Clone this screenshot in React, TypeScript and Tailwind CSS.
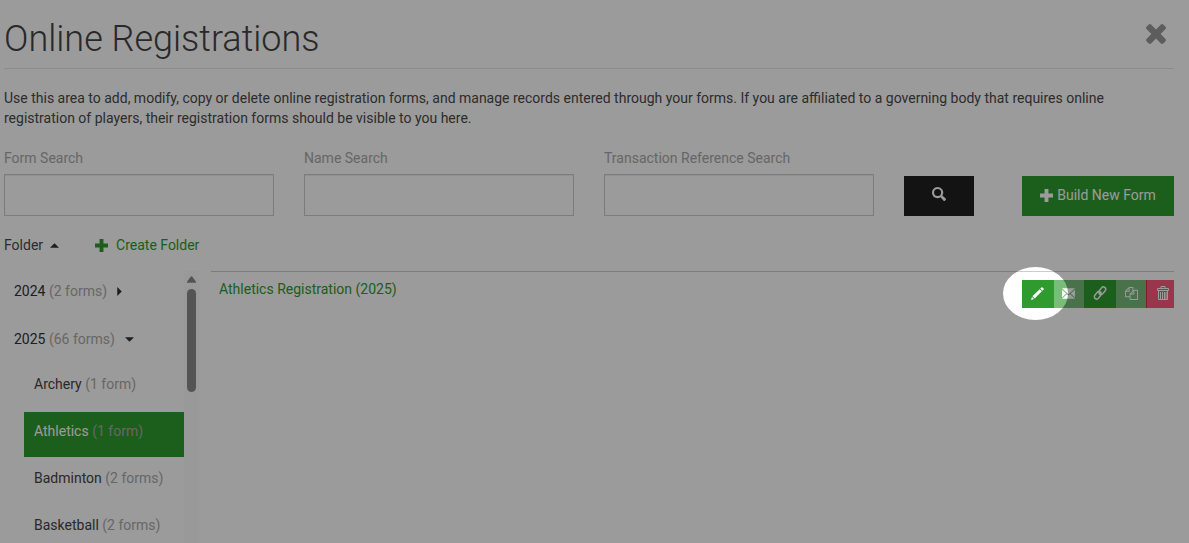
import React from "react";

const FONT = "font-['Roboto','Liberation_Sans',sans-serif]";

function Icon({ d, className, box = "0 0 20 20" }: { d: string; className: string; box?: string }) {
  return (
    <svg viewBox={box} className={className} fill="currentColor" aria-hidden="true">
      <path fillRule="evenodd" d={d} />
    </svg>
  );
}

const PLUS = "M7 0h6v7h7v6h-7v7H7v-7H0V7h7z";
const CROSS =
  "M1490 1322q0 40-28 68l-136 136q-28 28-68 28t-68-28l-294-294-294 294q-28 28-68 28t-68-28l-136-136q-28-28-28-68t28-68l294-294-294-294q-28-28-28-68t28-68l136-136q28-28 68-28t68 28l294 294 294-294q28-28 68-28t68 28l136 136q28 28 28 68t-28 68l-294 294 294 294q28 28 28 68z";
const SEARCH =
  "M8 0a8 8 0 0 1 6.8 12.2l4.7 4.3q1 1 0 2l-1 1q-1 1-2 0l-4.3-4.7A8 8 0 1 1 8 0zM8 3a5 5 0 1 0 0 10A5 5 0 0 0 8 3z";
const PENCIL =
  "M16 0.6q.8-.8 1.6 0l1.8 1.8q.8.8 0 1.6l-1.8 1.8-3.400-3.400zM13.300 3.300l3.400 3.400L5.600 17.800 2.200 14.400zM1.500 15.400l3.100 3.100L0 20z";
const MAIL =
  "M0 0h20L10 9zM0 2.200L6.500 8 0 14.200zM20 2.200L13.500 8 20 14.200zM7.500 9L10 11.200 12.500 9 20 16H0z";
const COPY =
  "M1696 384q40 0 68 28t28 68v1216q0 40-28 68t-68 28h-960q-40 0-68-28t-28-68v-288h-544q-40 0-68-28t-28-68v-672q0-40 20-88t48-76l408-408q28-28 76-48t88-20h416q40 0 68 28t28 68v328q68-40 128-40h416zm-544 213l-299 299h299v-299zm-640-384l-299 299h299v-299zm196 647l316-316v-416h-384v416q0 40-28 68t-68 28h-416v640h512v-256q0-40 20-88t48-76zm956 804v-1152h-384v416q0 40-28 68t-68 28h-416v640h896z";

function LinkIcon() {
  return (
    <svg viewBox="0 0 14 14" className="size-3.5" fill="none" stroke="currentColor" strokeWidth="1.5" aria-hidden="true">
      <rect x="5.300" y="2.300" width="8" height="4.600" rx="2.300" transform="rotate(-52 9.300 4.600)" />
      <rect x="0.700" y="7.100" width="8" height="4.600" rx="2.300" transform="rotate(-52 4.700 9.400)" />
      <path d="M5.800 8.400l2.500-3" />
    </svg>
  );
}

function TrashIcon() {
  return (
    <svg viewBox="0 0 12 14" className="h-3.5 w-3" fill="none" stroke="currentColor" aria-hidden="true">
      <path d="M4 2.500v-2h4v2M0.500 4.500v-2h11v2zM1.500 4.500v9h9v-9M3.500 6v7M5.500 6v7M7.500 6v7M9 6v7" />
    </svg>
  );
}

function SearchField({ id, label }: { id: string; label: string }) {
  return (
    <div className="w-[270px]">
      <label htmlFor={id} className="block text-[#a9a9a9]">{label}</label>
      <input
        id={id}
        type="text"
        className="mt-1.5 block h-[42px] w-full border border-[#ccc] bg-white px-3 shadow-[inset_0_1px_1px_rgba(0,0,0,0.075)]"
      />
    </div>
  );
}

const SPORTS = [
  { name: "Archery", count: "(1 form)" },
  { name: "Athletics", count: "(1 form)", selected: true },
  { name: "Badminton", count: "(2 forms)" },
  { name: "Basketball", count: "(2 forms)" },
];

export default function App() {
  return (
    <div className={`relative h-screen overflow-hidden bg-white pr-[15px] pl-1 text-sm leading-5 text-[#4a4a4a] ${FONT}`}>
      <header className="flex h-[69px] items-center justify-between border-b border-[#e5e5e5] pt-2.5">
        <h1 className="text-4xl leading-10 font-light text-[#444]">Online Registrations</h1>
        <button type="button" aria-label="Close" className="mr-2 mb-2.5 text-[#999]">
          <Icon d={CROSS} box="302 366 1188 1188" className="size-5" />
        </button>
      </header>

      <p className="mt-[19px] pr-10">
        Use this area to add, modify, copy or delete online registration forms, and manage records entered through your
        forms. If you are affiliated to a governing body that requires online registration of players, their
        registration forms should be visible to you here.
      </p>

      <form className="mt-5 flex items-end gap-[30px]">
        <SearchField id="form-search" label="Form Search" />
        <SearchField id="name-search" label="Name Search" />
        <SearchField id="reference-search" label="Transaction Reference Search" />
        <button type="button" aria-label="Search" className="flex h-10 w-[70px] items-center justify-center bg-[#202020] pb-1 text-white">
          <Icon d={SEARCH} className="size-3.5" />
        </button>
        <button type="button" className="ml-auto flex h-10 w-[152px] items-center justify-center gap-1 bg-[#2f9b2f] pb-0.5 text-white">
          <Icon d={PLUS} className="size-[13px]" />
          Build New Form
        </button>
      </form>

      <div className="mt-[19px] flex items-center">
        <button type="button" className="flex items-center gap-[7px]">
          Folder
          <Icon d="M0 5L5 0l5 5z" box="0 0 10 5" className="h-[5px] w-[9px] text-[#333]" />
        </button>
        <a href="#create" className="ml-9 flex items-center gap-2 text-[#2f9b2f]">
          <Icon d={PLUS} className="size-[13px]" />
          Create Folder
        </a>
      </div>

      <div className="mt-4 flex">
        <nav className="flex w-[195px] shrink-0">
          <ul className="w-[180px]">
            <li className="flex h-12 items-start pt-[10px] pl-[10px]">
              <a href="#2024" className="flex items-center text-[#333]">
                2024&nbsp;<span className="text-[#aaa]">(2 forms)</span>
                <Icon d="M0 0l5 5-5 5z" box="0 0 5 10" className="ml-[10px] h-[9px] w-[5px]" />
              </a>
            </li>
            <li>
              <a href="#2025" className="flex h-[46px] items-start pt-[10px] pl-[10px] text-[#333]">
                2025&nbsp;<span className="text-[#aaa]">(66 forms)</span>
                <Icon d="M0 0h10L5 5z" box="0 0 10 5" className="mt-2 ml-[10px] h-[5px] w-[9px]" />
              </a>
              <ul className="flex flex-col gap-0.5 pl-5">
                {SPORTS.map((s) => (
                  <li key={s.name}>
                    <a
                      href={`#${s.name}`}
                      className={`block h-[45px] pt-[9px] pl-[10px] ${s.selected ? "bg-[#2f9b2f] text-white" : "text-[#444]"}`}
                    >
                      {s.name} <span className="text-[#aaa]">{s.count}</span>
                    </a>
                  </li>
                ))}
              </ul>
            </li>
          </ul>
          <div className="flex w-[15px] flex-col items-center bg-[#fcfcfc] pt-[5px] text-[#8b8b8b]">
            <Icon d="M4 0.500q1-1 2 0l4 5.500v1H0V6z" box="0 0 10 7" className="h-[7px] w-[9px]" />
            <div className="mt-1.5 h-[103px] w-[9px] rounded-full bg-[#8b8b8b]" />
          </div>
        </nav>

        <main className="ml-3 flex h-[38px] flex-1 items-start justify-between border-t border-[#ccc] pt-2 pl-2">
          <a href="#athletics-2025" className="-mt-px text-[#2f9b2f]">Athletics Registration (2025)</a>
          <div className="relative flex h-7 w-[152px] text-white">
            <button type="button" aria-label="Edit" className="flex w-8 items-center justify-center bg-[#2f9b2f] pr-px pb-0.5">
              <Icon d={PENCIL} className="size-[13px]" />
            </button>
            <button type="button" aria-label="Email" className="flex w-[30px] items-center justify-center bg-[#7abc7a] pr-px pb-0.5">
              <Icon d={MAIL} box="0 0 20 16" className="h-[11px] w-[13px]" />
            </button>
            <button type="button" aria-label="Copy link" className="flex w-8 items-center justify-center bg-[#2f9b2f] pb-0.5">
              <LinkIcon />
            </button>
            <button type="button" aria-label="Duplicate" className="flex w-[30px] items-center justify-center bg-[#7abc7a] pb-0.5">
              <Icon d={COPY} box="0 0 1792 1792" className="size-[13px]" />
            </button>
            <button type="button" aria-label="Delete" className="flex w-7 items-center justify-center border-l border-[#d03048] bg-[#fd5a7c] pb-0.5 pl-1">
              <TrashIcon />
            </button>
            <div className="pointer-events-none absolute -top-[13px] -left-[19px] h-[53px] w-[65px] rounded-[50%] shadow-[0_0_0_2000px_rgba(0,0,0,0.392)]" />
          </div>
        </main>
      </div>
    </div>
  );
}
